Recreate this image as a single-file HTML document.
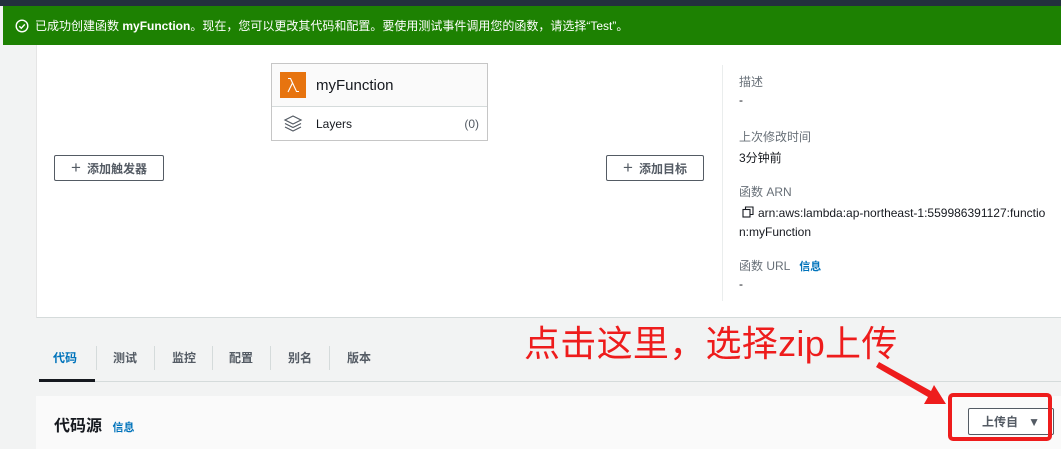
<!DOCTYPE html>
<html><head><meta charset="utf-8"><style>
*{margin:0;padding:0;box-sizing:border-box}
body{width:1061px;height:449px;overflow:hidden;background:#f2f3f3;font-family:"Liberation Sans","Noto Sans CJK SC",sans-serif;position:relative;color:#16191f}
.a{position:absolute}
.btn{position:absolute;background:#fff;border:1px solid #545b64;border-radius:2px;font-size:12px;font-weight:bold;color:#545b64;display:flex;align-items:center;justify-content:center;gap:6px}
.lbl{font-size:12px;color:#687078}
.val{font-size:12px;color:#16191f}
.tab{position:absolute;top:349px;font-size:12px;font-weight:bold;color:#545b64}
.sep{position:absolute;top:346px;width:1px;height:24px;background:#d5dbdb}
</style></head><body>
<div class="a" style="left:0;top:0;width:1061px;height:6px;background:#232f3e"></div>
<div class="a" style="left:3px;top:6px;width:1058px;height:39px;background:#1d8102;color:#fff;font-size:12px;display:flex;align-items:center;padding-left:12px">
<svg width="14" height="14" viewBox="0 0 14 14" style="margin-right:6px"><circle cx="7" cy="7" r="5.8" fill="none" stroke="#fff" stroke-width="1.4"/><path d="M4.3 7.2l2 2 3.5-3.8" fill="none" stroke="#fff" stroke-width="1.4"/></svg>
已成功创建函数&nbsp;<b>myFunction</b>。现在，您可以更改其代码和配置。要使用测试事件调用您的函数，请选择“Test”。</div>
<div class="a" style="left:36px;top:45px;width:1025px;height:273px;background:#fff;border-bottom:1px solid #d5dbdb;border-left:1px solid #e5e5e5"></div>
<div class="a" style="left:271px;top:63px;width:217px;height:78px;border:1px solid #c6c6c6;background:#fff">
 <div style="height:43px;background:#fafafa;border-bottom:1px solid #d5dbdb;display:flex;align-items:center;padding-left:8px">
  <div style="width:26px;height:26px;background:#e7740f;display:flex;align-items:center;justify-content:center"><svg width="18" height="18" viewBox="0 0 18 18"><path d="M4 16 L8.5 7 L6.5 2.5 H4 M6.5 2.5 L12.5 15.5 H15" fill="none" stroke="#fff" stroke-width="1.1"/></svg></div>
  <span style="margin-left:10px;font-size:15px;color:#16191f">myFunction</span></div>
 <div style="height:33px;display:flex;align-items:center;padding:0 8px 0 10px;font-size:12px">
  <svg width="22" height="22" viewBox="0 0 22 22"><g fill="none" stroke="#545b64" stroke-width="1.2"><path d="M11 3l8 4-8 4-8-4z"/><path d="M3 10.5l8 4 8-4"/><path d="M3 14l8 4 8-4"/></g></svg>
  <span style="margin-left:12px">Layers</span><span style="margin-left:auto;color:#545b64">(0)</span></div>
</div>
<div class="btn" style="left:54px;top:155px;width:110px;height:26px"><span style="font-size:17px;font-weight:normal">+</span>添加触发器</div>
<div class="btn" style="left:606px;top:155px;width:98px;height:26px"><span style="font-size:17px;font-weight:normal">+</span>添加目标</div>
<div class="a" style="left:722px;top:65px;width:1px;height:236px;background:#eaeded"></div>
<div class="a lbl" style="left:739px;top:73px">描述</div>
<div class="a val" style="left:739px;top:93px">-</div>
<div class="a lbl" style="left:739px;top:128px">上次修改时间</div>
<div class="a val" style="left:739px;top:149px">3分钟前</div>
<div class="a lbl" style="left:739px;top:183px">函数 ARN</div>
<div class="a val" style="left:742px;top:204px;line-height:19px;width:320px"><svg width="12" height="12" viewBox="0 0 12 12" style="vertical-align:-1px;margin-right:4px"><rect x="1" y="3.5" width="7" height="7.5" fill="none" stroke="#16191f" stroke-width="1.1"/><path d="M3.5 3.5V1h7.5v7.5H8" fill="none" stroke="#16191f" stroke-width="1.1"/></svg>arn:aws:lambda:ap-northeast-1:559986391127:functio<br><span style="margin-left:-3px">n:myFunction</span></div>
<div class="a lbl" style="left:739px;top:257px">函数 URL <b style="color:#0073bb;font-size:11px;margin-left:6px">信息</b></div>
<div class="a val" style="left:739px;top:277px">-</div>
<div class="tab" style="left:53px;color:#0073bb">代码</div>
<div class="sep" style="left:96px"></div>
<div class="tab" style="left:113px">测试</div>
<div class="sep" style="left:154px"></div>
<div class="tab" style="left:172px">监控</div>
<div class="sep" style="left:212px"></div>
<div class="tab" style="left:229px">配置</div>
<div class="sep" style="left:270px"></div>
<div class="tab" style="left:288px">别名</div>
<div class="sep" style="left:329px"></div>
<div class="tab" style="left:347px">版本</div>
<div class="a" style="left:39px;top:381px;width:1022px;height:1px;background:#d5dbdb"></div>
<div class="a" style="left:39px;top:379px;width:56px;height:3px;background:#16191f"></div>
<div class="a" style="left:36px;top:396px;width:1025px;height:53px;background:#fafafa"></div>
<div class="a" style="left:54px;top:412px;font-size:16px;font-weight:bold">代码源 <span style="color:#0073bb;font-size:11px;margin-left:6px">信息</span></div>
<div class="btn" style="left:968px;top:408px;width:86px;height:27px;gap:10px">上传自 <span style="font-size:12px">▼</span></div>
<div class="a" style="left:948px;top:393px;width:104px;height:48px;border:4px solid #ee1c1c;border-radius:5px"></div>
<div class="a" style="left:524px;top:322px;font-size:36px;color:#ee1c1c;line-height:44px;white-space:nowrap;letter-spacing:0.3px">点击这里，选择zip上传</div>
<svg class="a" style="left:860px;top:355px" width="100" height="60" viewBox="0 0 100 60"><path d="M16 12 L68 42 L64 49 L86 49 L74 30 L71 36 L19 7 Z" fill="#ee1c1c"/></svg>
</body></html>
